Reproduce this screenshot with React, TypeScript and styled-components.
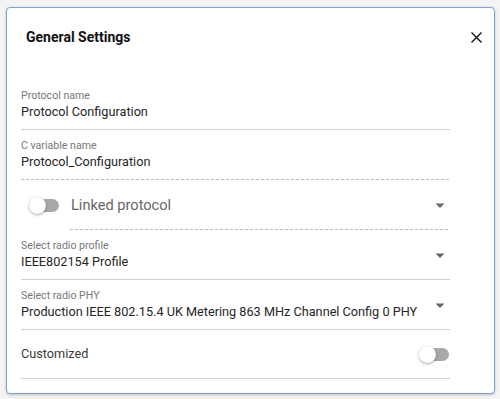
import React from "react";
import styled, { createGlobalStyle } from "styled-components";

const Global = createGlobalStyle`
  html, body { margin: 0; padding: 0; background: #f4f4f4; }
  body { font-family: Roboto, "Noto Sans", Arial, sans-serif; }
  * { box-sizing: border-box; }
`;

const Page = styled.div`
  width: 500px;
  height: 399px;
  padding: 7px 0 0 6px;
`;

const Card = styled.section`
  width: 489px;
  height: 387px;
  background: #fff;
  border: 1px solid #7aa3e5;
  border-radius: 4px;
  box-shadow: 0 1px 3px rgba(0, 0, 0, 0.22);
  display: flex;
  flex-direction: column;
`;

const Header = styled.header`
  height: 58px;
  flex: none;
  display: flex;
  align-items: center;
  justify-content: space-between;
  padding: 0 6px 0 19px;
`;

const Title = styled.h2`
  margin: 0;
  font-size: 14px;
  line-height: 20px;
  font-weight: 700;
  color: #111;
`;

const CloseButton = styled.button`
  width: 24px;
  height: 24px;
  padding: 0;
  border: none;
  background: transparent;
  display: flex;
  align-items: center;
  justify-content: center;
  cursor: pointer;
`;

const Body = styled.div`
  padding: 14px 44px 0 14px;
  display: flex;
  flex-direction: column;
`;

const dashedLine = `
  background-image: repeating-linear-gradient(to right, #bdbdbd 0 3px, transparent 3px 5px);
  background-size: 100% 1px;
  background-repeat: no-repeat;
  background-position: left bottom;
`;

const Field = styled.div<{ $dashed?: boolean }>`
  height: 50px;
  display: flex;
  align-items: stretch;
  border-bottom: ${(p) => (p.$dashed ? "none" : "1px solid #d2d2d2")};
  ${(p) => (p.$dashed ? dashedLine : "")}
`;

const FieldText = styled.div`
  flex: 1;
  min-width: 0;
  padding-top: 10px;
  display: flex;
  flex-direction: column;
`;

const Label = styled.div`
  font-size: 10.6px;
  line-height: 12px;
  color: #787878;
`;

const Value = styled.div`
  margin-top: 2px;
  font-size: 12.7px;
  line-height: 16px;
  color: #262626;
  white-space: nowrap;
`;

const ArrowBox = styled.div`
  align-self: center;
  width: 24px;
  height: 24px;
  margin-right: -2px;
  flex: none;
`;

const LinkedRow = styled.div`
  height: 50px;
  display: flex;
  align-items: center;
  padding-left: 8px;
`;

const LinkedBox = styled.div`
  flex: 1;
  height: 100%;
  margin-left: 11px;
  padding-left: 1px;
  display: flex;
  align-items: center;
  justify-content: space-between;
  ${dashedLine}
`;

const LinkedLabel = styled.span`
  font-size: 14.6px;
  line-height: 20px;
  color: #666;
`;

const ToggleRow = styled.div`
  height: 49px;
  display: flex;
  align-items: center;
  justify-content: space-between;
  border-bottom: 1px solid #d2d2d2;
  padding-right: 1px;
`;

const ToggleLabel = styled.span`
  font-size: 12.7px;
  line-height: 16px;
  color: #3a3a3a;
`;

const SwitchRoot = styled.span`
  position: relative;
  display: inline-block;
  width: 30px;
  height: 17px;
  flex: none;
`;

const Track = styled.span`
  position: absolute;
  left: 3px;
  right: 0;
  top: 2px;
  height: 13px;
  border-radius: 7px;
  background: #a9a9a9;
`;

const Thumb = styled.span`
  position: absolute;
  left: 0;
  top: 0;
  width: 17px;
  height: 17px;
  border-radius: 50%;
  background: #fff;
  box-shadow: 0 1px 3px rgba(0, 0, 0, 0.35);
`;

const Switch = () => (
  <SwitchRoot>
    <Track />
    <Thumb />
  </SwitchRoot>
);

const Arrow = () => (
  <ArrowBox>
    <svg width="24" height="24" viewBox="0 0 24 24">
      <path d="M7.5 10.5l4.5 4.5 4.5-4.5z" fill="#666" />
    </svg>
  </ArrowBox>
);

const CloseIcon = () => (
  <svg width="11" height="11" viewBox="0 0 11 11">
    <path d="M1 1l9 9M10 1l-9 9" stroke="#111" strokeWidth="1.4" strokeLinecap="square" />
  </svg>
);

export default function App() {
  return (
    <>
      <Global />
      <Page>
        <Card>
          <Header>
            <Title>General Settings</Title>
            <CloseButton aria-label="Close">
              <CloseIcon />
            </CloseButton>
          </Header>
          <Body>
            <Field>
              <FieldText>
                <Label>Protocol name</Label>
                <Value>Protocol Configuration</Value>
              </FieldText>
            </Field>
            <Field $dashed>
              <FieldText>
                <Label>C variable name</Label>
                <Value>Protocol_Configuration</Value>
              </FieldText>
            </Field>
            <LinkedRow>
              <Switch />
              <LinkedBox>
                <LinkedLabel>Linked protocol</LinkedLabel>
                <Arrow />
              </LinkedBox>
            </LinkedRow>
            <Field>
              <FieldText>
                <Label>Select radio profile</Label>
                <Value>IEEE802154 Profile</Value>
              </FieldText>
              <Arrow />
            </Field>
            <Field>
              <FieldText>
                <Label>Select radio PHY</Label>
                <Value>Production IEEE 802.15.4 UK Metering 863 MHz Channel Config 0 PHY</Value>
              </FieldText>
              <Arrow />
            </Field>
            <ToggleRow>
              <ToggleLabel>Customized</ToggleLabel>
              <Switch />
            </ToggleRow>
          </Body>
        </Card>
      </Page>
    </>
  );
}
